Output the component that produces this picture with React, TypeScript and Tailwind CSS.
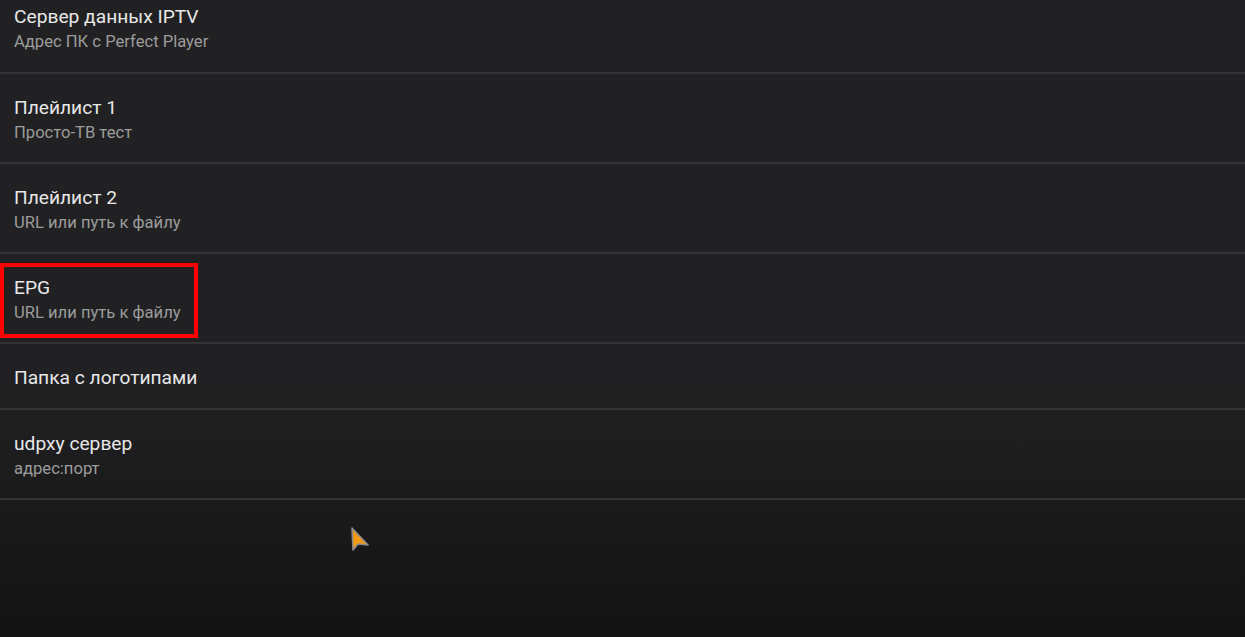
import React from 'react';

type Item = { title: string; subtitle?: string; focused?: boolean };

const items: Item[] = [
  { title: 'Плейлист 1', subtitle: 'Просто-ТВ тест' },
  { title: 'Плейлист 2', subtitle: 'URL или путь к файлу' },
  { title: 'EPG', subtitle: 'URL или путь к файлу', focused: true },
  { title: 'Папка с логотипами' },
  { title: 'udpxy сервер', subtitle: 'адрес:порт' },
];

function Row({ item }: { item: Item }) {
  return (
    <div className={`relative border-b-2 border-[#333335] px-[14px] pt-[4px] flex flex-col justify-center ${item.subtitle ? 'h-[90px]' : 'h-[66px]'}`}>
      <div className="text-[19.2px] leading-[26px] text-[#e8e8e8]">{item.title}</div>
      {item.subtitle && (
        <div className="text-[16.6px] leading-[24px] text-[#9c9c9c]">{item.subtitle}</div>
      )}
      {item.focused && (
        <div className="absolute left-[0px] top-[9px] w-[198px] h-[75px] border-4 border-[#ff0000]" />
      )}
    </div>
  );
}

export default function App() {
  return (
    <div
      className="relative w-[1245px] h-[637px] overflow-hidden bg-gradient-to-b from-[#212123] from-60% to-[#131313]"
      style={{ fontFamily: 'Roboto, "Noto Sans", sans-serif' }}
    >
      {/* first row is scrolled partly out of view */}
      <div className="border-b-2 border-[#333335] px-[14px] h-[74px] flex flex-col justify-start pt-[4px]">
        <div className="text-[19.2px] leading-[26px] text-[#e8e8e8]">Сервер данных IPTV</div>
        <div className="text-[16.6px] leading-[24px] text-[#9c9c9c]">Адрес ПК с Perfect Player</div>
      </div>
      {items.map((it) => (
        <Row key={it.title} item={it} />
      ))}

      {/* mouse pointer */}
      <svg className="absolute left-[339px] top-[520px]" width="40" height="40" viewBox="0 0 40 40">
        <polygon points="13,8 14,30 19,24 29,25" fill="#f39a12" stroke="#8a8a8a" strokeWidth="1.6" strokeLinejoin="round" />
      </svg>
    </div>
  );
}
